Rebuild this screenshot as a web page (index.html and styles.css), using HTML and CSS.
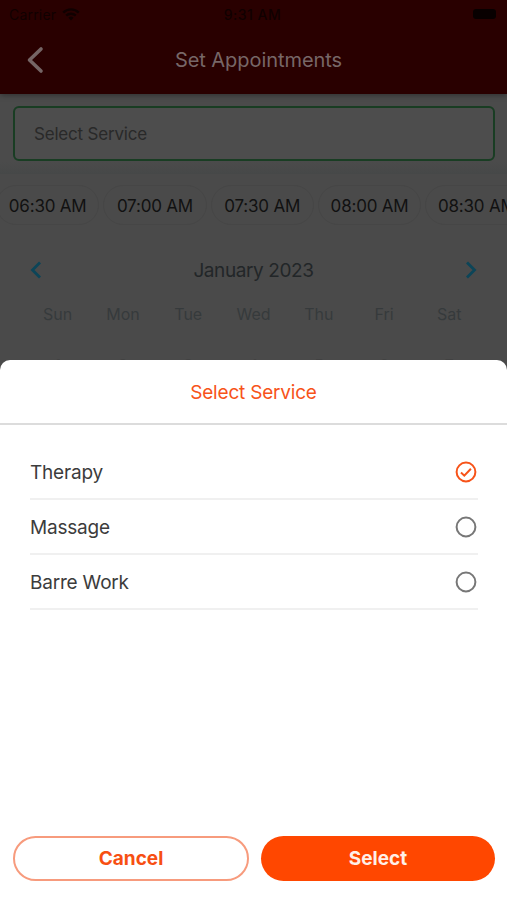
FILE: index.html
```html
<!DOCTYPE html>
<html lang="en">
<head>
<meta charset="utf-8">
<meta name="viewport" content="width=device-width, initial-scale=1">
<title>Set Appointments</title>
<link rel="stylesheet" href="styles.css">
</head>
<body>
<div class="app">
  <header class="header">
    <div class="status">
      <div class="carrier"><span>Carrier</span>
        <svg width="18" height="13" viewBox="0 0 18 13" fill="none" stroke="currentColor" stroke-width="2.4"><path d="M1.2 4.6a11 11 0 0 1 15.6 0M4.2 7.7a6.8 6.8 0 0 1 9.6 0"/><path d="M9 12.5 6.4 9.8a3.7 3.7 0 0 1 5.2 0z" fill="currentColor" stroke="none"/></svg>
      </div>
      <span class="clock">9:31 AM</span>
      <span class="battery"></span>
    </div>
    <div class="navbar">
      <svg class="back" width="18" height="28" viewBox="0 0 18 28"><path d="M15 3 3.500 14 15 25"/></svg>
      <h1 class="title">Set Appointments</h1>
      <span></span>
    </div>
  </header>
  <section class="service"><div class="field">Select Service</div></section>
  <section class="times">
    <div class="chip">06:30 AM</div><div class="chip">07:00 AM</div><div class="chip">07:30 AM</div><div class="chip">08:00 AM</div><div class="chip">08:30 AM</div>
  </section>
  <section class="calendar">
    <div class="month">
      <svg class="arrow" width="12" height="18" viewBox="0 0 12 18"><path d="M10 1.500 2.500 9l7.500 7.500"/></svg>
      <span class="month-name">January 2023</span>
      <svg class="arrow" width="12" height="18" viewBox="0 0 12 18"><path d="M2 1.500 9.500 9 2 16.500"/></svg>
    </div>
    <div class="week"><span>Sun</span><span>Mon</span><span>Tue</span><span>Wed</span><span>Thu</span><span>Fri</span><span>Sat</span></div>
    <div class="week dates"><span>1</span><span>2</span><span>3</span><span>4</span><span>5</span><span>6</span><span>7</span></div>
  </section>
  <section class="sheet">
    <h2 class="sheet-title">Select Service</h2>
    <ul class="options">
      <li class="option"><span>Therapy</span>
        <svg class="radio checked" width="22" height="22" viewBox="0 0 22 22"><circle cx="11" cy="11" r="9.400"/><path d="m6 11.500 3.300 3.200 6.600-7"/></svg></li>
      <li class="option"><span>Massage</span>
        <svg class="radio" width="22" height="22" viewBox="0 0 22 22"><circle cx="11" cy="11" r="9.400"/></svg></li>
      <li class="option"><span>Barre Work</span>
        <svg class="radio" width="22" height="22" viewBox="0 0 22 22"><circle cx="11" cy="11" r="9.400"/></svg></li>
    </ul>
    <div class="actions">
      <button class="button cancel">Cancel</button>
      <button class="button select">Select</button>
    </div>
  </section>
</div>
</body>
</html>
```
FILE: styles.css
```css
* { box-sizing: border-box; }
body { margin: 0; font-family: Inter, "Liberation Sans", sans-serif; }
.app { position: relative; width: 507px; height: 900px; overflow: hidden; background: #4a4a4a; }
.header { position: relative; height: 94px; background: #290000; box-shadow: 0 1px 6px rgba(0, 0, 0, .4); }
.status { display: grid; grid-template-columns: 1fr auto 1fr; align-items: center; height: 28px; padding: 0 11px 0 9px; color: #100000; font-size: 14px; }
.carrier { display: flex; align-items: center; gap: 6px; letter-spacing: .2px; }
.clock { font-weight: 500; letter-spacing: .5px; }
.battery { justify-self: end; width: 23px; height: 10px; border-radius: 3px; background: #080000; }
.navbar { display: grid; grid-template-columns: 1fr auto 1fr; align-items: center; height: 64px; padding: 0 18px 0 26px; }
.title { margin: 0 -2px 0 0; color: #776767; font-size: 20px; font-weight: 400; letter-spacing: -.05px; }
.back { fill: none; stroke: #756565; stroke-width: 3.600; stroke-linecap: round; stroke-linejoin: round; }
.service { height: 80px; padding: 12px 12px 0 13px; background: linear-gradient(#4b4b4b 85%, #464848); }
.field { height: 55px; padding-left: 19px; border: 2px solid #193d23; border-radius: 6px; background: #4d4d4d; color: #292929; font-size: 17px; line-height: 52px; letter-spacing: -.2px; }
.times { display: flex; gap: 4px; height: 62px; margin-left: -4px; padding-top: 11px; }
.chip { flex: 0 0 103.300px; height: 40px; border: 1px solid #464646; border-radius: 20px; color: #111; font-size: 17px; line-height: 40px; letter-spacing: -.2px; text-align: center; white-space: nowrap; }
.month { display: flex; justify-content: space-between; align-items: center; height: 64px; padding: 4px 30px 0; color: #222628; font-size: 19px; letter-spacing: -.4px; }
.arrow { fill: none; stroke: #0c4558; stroke-width: 2.800; }
.week { display: grid; grid-template-columns: repeat(7, 1fr); padding: 4px 25px; color: #363a3c; font-size: 16px; line-height: 20px; text-align: center; }
.dates { padding-top: 27px; color: #424242; }
.sheet { position: absolute; top: 360px; left: 0; right: 0; bottom: 0; display: flex; flex-direction: column; border-radius: 10px 10px 0 0; background: #fff; }
.sheet-title { height: 65px; margin: 0; border-bottom: 2px solid #dcdcdc; color: #f75319; font-size: 19px; font-weight: 400; line-height: 65px; letter-spacing: -.2px; text-align: center; }
.options { margin: 20px 29px 0 30px; padding: 0; list-style: none; }
.option { display: flex; align-items: center; justify-content: space-between; height: 55px; padding: 1px 1.500px 0 0; border-bottom: 2px solid #f0f0f0; color: #3c3c3c; font-size: 19px; letter-spacing: -.2px; }
.option span { padding-top: 1px; }
.radio { fill: none; stroke: #777; stroke-width: 2; }
.checked { stroke: #f75319; }
.actions { display: grid; grid-template-columns: 236px 234px; gap: 12px; margin-top: auto; padding: 0 12px 19px 13px; }
.button { height: 45px; padding: 0; border: 0; border-radius: 23px; font: 700 19px Inter, sans-serif; }
.cancel { border: 2px solid #f79b7d; background: #fff; color: #f74f12; }
.select { background: #ff4700; color: #fff0e8; }
```
